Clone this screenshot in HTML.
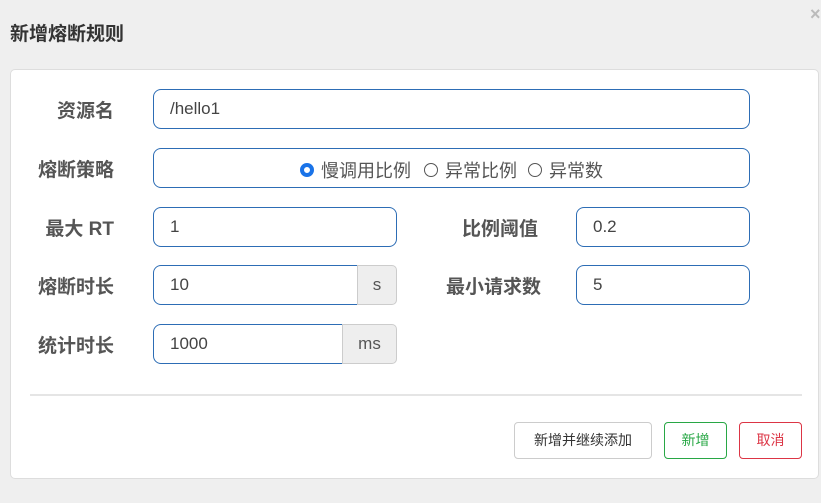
<!DOCTYPE html>
<html><head><meta charset="utf-8"><style>
body{margin:0;width:821px;height:503px;background:#efefef;font-family:"Liberation Sans","Noto Sans CJK SC",sans-serif;position:relative;overflow:hidden}
.a{position:absolute}
.title{left:10px;top:19px;font-size:19px;font-weight:bold;color:#333}
.panel{left:10px;top:69px;width:807px;height:408px;background:#fff;border:1px solid #ddd;border-radius:5px}
.lbl{font-size:19px;font-weight:bold;color:#555;text-align:right;width:120px;line-height:46px}
.in{box-sizing:border-box;border:1px solid #2d6db5;border-radius:8px;background:#fff;height:40px;line-height:38px;padding-left:16px;font-size:17px;color:#444}
.ad{box-sizing:border-box;border:1px solid #ccc;background:#eee;height:40px;line-height:38px;text-align:center;font-size:17px;color:#555;border-radius:0 5px 5px 0}
.btn{box-sizing:border-box;height:37px;line-height:35px;text-align:center;font-size:14px;border-radius:4px;top:422px}
.r{position:absolute;top:15px;width:14px;height:14px;border:1px solid #555;border-radius:50%;box-sizing:border-box}
.t{position:absolute;top:0;font-size:18px;line-height:46px;color:#555;white-space:nowrap}
</style></head><body>
<div class="a title">新增熔断规则</div>
<div class="a" style="left:810px;top:4px;color:#bbb;font-size:18px;font-weight:bold">×</div>
<div class="a panel"></div>
<div class="a lbl" style="left:-6px;top:89px">资源名</div>
<div class="a in" style="left:153px;top:89px;width:597px">/hello1</div>
<div class="a lbl" style="left:-6px;top:148px">熔断策略</div>
<div class="a in" style="left:153px;top:148px;width:597px;padding:0"></div>
<div class="a" style="left:0;top:148px;width:821px;height:40px">
<span class="r" style="left:300px;border:4px solid #1a73e8"></span><span class="t" style="left:321px">慢调用比例</span>
<span class="r" style="left:424px"></span><span class="t" style="left:445px">异常比例</span>
<span class="r" style="left:528px"></span><span class="t" style="left:549px">异常数</span>
</div>
<div class="a lbl" style="left:-6px;top:207px">最大 RT</div>
<div class="a in" style="left:153px;top:207px;width:244px">1</div>
<div class="a lbl" style="left:418px;top:207px">比例阈值</div>
<div class="a in" style="left:576px;top:207px;width:174px">0.2</div>
<div class="a lbl" style="left:-6px;top:265px">熔断时长</div>
<div class="a in" style="left:153px;top:265px;width:205px;border-radius:8px 0 0 8px">10</div>
<div class="a ad" style="left:357px;top:265px;width:40px">s</div>
<div class="a lbl" style="left:421px;top:265px">最小请求数</div>
<div class="a in" style="left:576px;top:265px;width:174px">5</div>
<div class="a lbl" style="left:-6px;top:324px">统计时长</div>
<div class="a in" style="left:153px;top:324px;width:190px;border-radius:8px 0 0 8px">1000</div>
<div class="a ad" style="left:342px;top:324px;width:55px">ms</div>
<div class="a" style="left:30px;top:394px;width:772px;height:2px;background:#e5e5e5"></div>
<div class="a btn" style="left:514px;width:138px;border:1px solid #ccc;color:#333">新增并继续添加</div>
<div class="a btn" style="left:664px;width:63px;border:1px solid #28a745;color:#28a745">新增</div>
<div class="a btn" style="left:739px;width:63px;border:1px solid #dc3545;color:#dc3545">取消</div>
</body></html>
